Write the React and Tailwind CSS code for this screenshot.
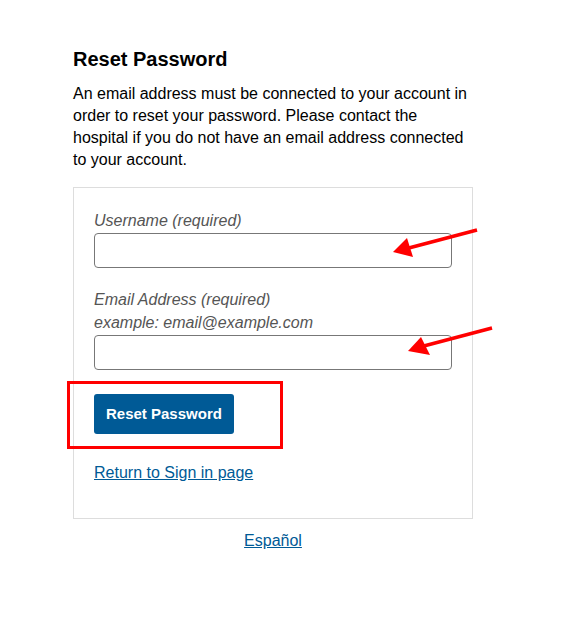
export default function App() {
  return (
    <div className="relative min-h-[625px] w-[568px] bg-white font-['Liberation_Sans',Arial,sans-serif] text-black">
      <div className="ml-[73px] w-[400px] pt-[47px]">
        <h1 className="text-[20px] font-bold leading-[24px]">Reset Password</h1>
        <p className="mt-[12px] text-[16px] leading-[22px]">
          An email address must be connected to your account in order to reset your password. Please contact the hospital if you do not have an email address connected to your account.
        </p>
        <div className="mt-[16px] border border-[#dddddd] px-[20px] pt-[21px] pb-[34px]">
          <label className="block text-[16px] italic leading-[24px] text-[#555555]">Username (required)</label>
          <input className="block h-[35px] w-full rounded-[4px] border border-[#777777] bg-white" />
          <label className="mt-[20px] block text-[16px] italic leading-[23px] text-[#555555]">
            Email Address (required)
            <br />
            example: email@example.com
          </label>
          <input className="mt-[1px] block h-[35px] w-full rounded-[4px] border border-[#777777] bg-white" />
          <button className="mt-[24px] block h-[40px] rounded-[3px] bg-[#005a96] px-[12px] text-[15px] font-bold text-white">
            Reset Password
          </button>
          <a href="#" className="mt-[28px] block w-fit text-[16px] leading-[22px] text-[#005a96] underline">
            Return to Sign in page
          </a>
        </div>
        <div className="mt-[10px] text-center">
          <a href="#" className="text-[16px] leading-[22px] text-[#005a96] underline">Español</a>
        </div>
      </div>

      <div className="pointer-events-none absolute left-[67px] top-[381px] h-[68px] w-[216px] border-[3px] border-[#ff0000]" />

      <svg className="pointer-events-none absolute left-0 top-0" width="568" height="625" viewBox="0 0 568 625">
        <line x1="477" y1="230" x2="405" y2="249" stroke="#ff0000" strokeWidth="3.5" />
        <polygon points="393,252 407,238 413,257" fill="#ff0000" />
        <line x1="492" y1="328" x2="420" y2="347" stroke="#ff0000" strokeWidth="3.5" />
        <polygon points="408,351 421,337 430,355" fill="#ff0000" />
      </svg>
    </div>
  );
}
